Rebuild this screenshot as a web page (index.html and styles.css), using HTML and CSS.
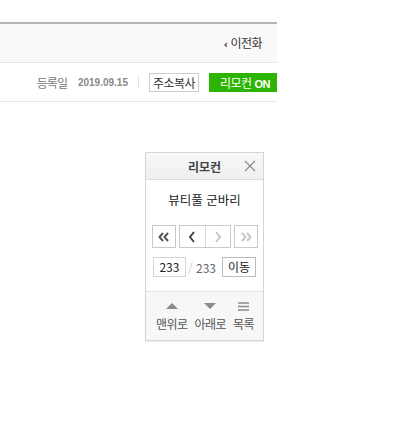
FILE: index.html
```html
<!DOCTYPE html>
<html lang="ko">
<head>
	<meta charset="UTF-8">
	<title>리모컨</title>
	<link rel="stylesheet" href="styles.css">
</head>
<body>
	<div class="viewer">
		<div class="top">
			<a href="#" class="prev-ep"><span class="lt">&lsaquo;</span> 이전화</a>
		</div>
		<div class="info">
			<span class="label">등록일</span>
			<span class="date">2019.09.15</span>
			<span class="bar"></span>
			<a href="#" class="copy">주소복사</a>
			<a href="#" class="remote-on">리모컨 <b>ON</b></a>
		</div>
	</div>

	<div class="remote">
		<div class="remote-head">
			<strong>리모컨</strong>
			<a href="#" class="close">
				<svg width="12" height="12" viewBox="0 0 12 12"><path d="M1 1L11 11M11 1L1 11" stroke="#888" stroke-width="1.1" fill="none"/></svg>
			</a>
		</div>
		<div class="remote-body">
			<p class="title">뷰티풀 군바리</p>
			<div class="pager">
				<a href="#" class="pbtn">
					<svg width="12" height="10" viewBox="0 0 12 10"><path d="M5 1L1.5 5L5 9M10 1L6.5 5L10 9" stroke="#555" stroke-width="2" fill="none"/></svg>
				</a>
				<div class="pgroup">
					<a href="#" class="pbtn">
						<svg width="8" height="12" viewBox="0 0 8 12"><path d="M6 1L2 6L6 11" stroke="#444" stroke-width="2" fill="none"/></svg>
					</a>
					<a href="#" class="pbtn">
						<svg width="8" height="12" viewBox="0 0 8 12"><path d="M2 1L6 6L2 11" stroke="#c8c8c8" stroke-width="2" fill="none"/></svg>
					</a>
				</div>
				<a href="#" class="pbtn">
					<svg width="12" height="10" viewBox="0 0 12 10"><path d="M2 1L5.5 5L2 9M7 1L10.5 5L7 9" stroke="#c8c8c8" stroke-width="2" fill="none"/></svg>
				</a>
			</div>
			<div class="jump">
				<span class="num">233</span>
				<span class="total"><i>/</i> 233</span>
				<a href="#" class="go">이동</a>
			</div>
		</div>
		<div class="remote-foot">
			<a href="#" class="fbtn">
				<svg width="12" height="7" viewBox="0 0 12 7"><path d="M6 0L12 6H0Z" fill="#8a8a8a"/></svg>
				<span>맨위로</span>
			</a>
			<a href="#" class="fbtn">
				<svg width="12" height="7" viewBox="0 0 12 7"><path d="M0 0H12L6 6Z" fill="#8a8a8a"/></svg>
				<span>아래로</span>
			</a>
			<a href="#" class="fbtn">
				<svg width="11" height="9" viewBox="0 0 11 9"><path d="M0 1H11M0 4.5H11M0 8H11" stroke="#8a8a8a" stroke-width="1.6"/></svg>
				<span>목록</span>
			</a>
		</div>
	</div>
</body>
</html>
```

FILE: styles.css
```css
*{
	padding: 0;
	margin: 0;
	box-sizing: border-box;
}
body{
	font-family: "Noto Sans CJK KR", "Noto Sans", sans-serif;
	font-size: 12px;
	color: #333;
	background: #fff;
}
a{
	color: inherit;
	text-decoration: none;
}
.viewer{
	width: 277px;
	margin-top: 22px;
	border-top: 2px solid #b5b5b5;
}
.top{
	height: 39px;
	background: #f9f9f9;
	border-bottom: 1px solid #e6e6e6;
	display: flex;
	align-items: center;
	justify-content: flex-end;
	padding-right: 15px;
}
.prev-ep{
	font-size: 12px;
	color: #333;
	line-height: 1;
	letter-spacing: -0.5px;
}
.lt{
	font-family: "DejaVu Sans", sans-serif;
	font-weight: bold;
	font-size: 11px;
}
.info{
	height: 39px;
	border-bottom: 1px solid #e6e6e6;
	display: flex;
	align-items: center;
	justify-content: flex-end;
}
.label{
	color: #777;
	font-size: 12px;
	letter-spacing: -1px;
}
.date{
	margin-left: 11px;
	color: #888;
	font-family: "Liberation Sans", sans-serif;
	font-weight: bold;
	font-size: 10px;
}
.bar{
	width: 1px;
	height: 12px;
	background: #e3e3e3;
	margin: 0 10px;
}
.copy{
	height: 19px;
	width: 50px;
	text-align: center;
	border: 1px solid #ccc;
	line-height: 17px;
	font-size: 12px;
	letter-spacing: -0.5px;
	color: #333;
}
.remote-on{
	height: 19px;
	width: 68px;
	margin-left: 10px;
	padding-left: 11px;
	background: #2db400;
	color: #fff;
	line-height: 19px;
	font-size: 12px;
	letter-spacing: -0.5px;
}
.remote-on b{
	font-family: "Liberation Sans", sans-serif;
	font-size: 11px;
	letter-spacing: -0.5px;
}
.remote{
	position: absolute;
	left: 145px;
	top: 152px;
	width: 119px;
	border: 1px solid #d5d5d5;
	box-shadow: 0 1px 1px rgba(0,0,0,0.06);
	background: #fff;
}
.remote-head{
	position: relative;
	height: 27px;
	background: linear-gradient(#f8f8f8, #efefef);
	border-bottom: 1px solid #dcdcdc;
	display: flex;
	align-items: center;
	justify-content: center;
}
.remote-head strong{
	font-size: 12px;
	color: #444;
}
.close{
	position: absolute;
	right: 7px;
	top: 7px;
	line-height: 0;
}
.remote-body{
	padding: 11px 0 14px;
	border-bottom: 1px solid #e3e3e3;
}
.title{
	text-align: center;
	font-size: 12.5px;
	color: #222;
	line-height: 18px;
	margin-bottom: 16px;
}
.pager{
	display: flex;
	justify-content: center;
	gap: 3px;
}
.pgroup{
	display: flex;
	border: 1px solid #c9c9c9;
}
.pbtn{
	width: 24px;
	height: 23px;
	border: 1px solid #c9c9c9;
	display: flex;
	align-items: center;
	justify-content: center;
}
.pgroup .pbtn{
	width: 25px;
	height: 21px;
	border: 0;
}
.pgroup .pbtn + .pbtn{
	border-left: 1px solid #d9d9d9;
}
.jump{
	display: flex;
	align-items: center;
	justify-content: center;
	margin-top: 9px;
	height: 20px;
}
.num{
	width: 33px;
	height: 20px;
	border: 1px solid #d5d5d5;
	text-align: center;
	line-height: 18px;
	font-size: 12px;
	color: #222;
}
.total{
	margin: 0 6px 0 2px;
	color: #666;
	font-size: 12px;
}
.total i{
	color: #ccc;
	font-style: normal;
}
.go{
	height: 20px;
	padding: 0 5px;
	border: 1px solid #bbb;
	line-height: 18px;
	font-size: 12px;
	color: #222;
}
.remote-foot{
	background: #f7f7f7;
	display: flex;
	justify-content: space-between;
	padding: 10px 9px 8px 10px;
}
.fbtn{
	display: flex;
	flex-direction: column;
	align-items: center;
	gap: 5px;
	color: #555;
	font-size: 12px;
	letter-spacing: -0.5px;
}
.fbtn svg{
	height: 9px;
}
.fbtn span{
	line-height: 16px;
}
```
